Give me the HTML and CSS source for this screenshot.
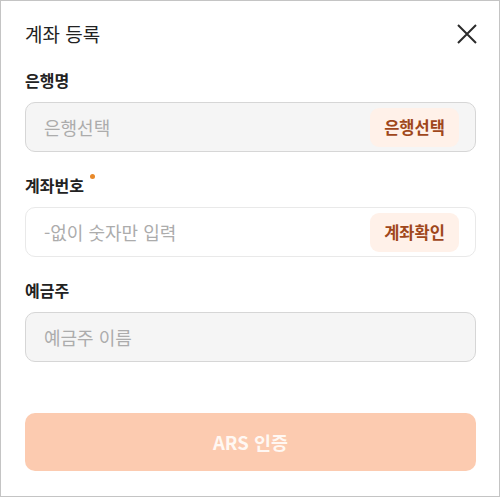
FILE: index.html
```html
<!DOCTYPE html>
<html lang="ko">
<head>
<meta charset="utf-8">
<link rel="stylesheet" href="styles.css">
</head>
<body>
<div class="modal">
  <div class="header">
    <h1 class="title">계좌 등록</h1>
    <button class="close" aria-label="닫기">
      <svg width="20" height="20" viewBox="0 0 20 20"><path d="M1 1L19 19M19 1L1 19" stroke="#2b2b2b" stroke-width="2" fill="none"/></svg>
    </button>
  </div>
  <div class="field">
    <div class="label">은행명</div>
    <div class="box filled">
      <span class="placeholder">은행선택</span>
      <span class="chip">은행선택</span>
    </div>
  </div>
  <div class="field">
    <div class="label">계좌번호<span class="dot"></span></div>
    <div class="box white">
      <span class="placeholder">-없이 숫자만 입력</span>
      <span class="chip">계좌확인</span>
    </div>
  </div>
  <div class="field">
    <div class="label">예금주</div>
    <div class="box filled">
      <span class="placeholder">예금주 이름</span>
    </div>
  </div>
  <button class="submit">ARS 인증</button>
</div>
</body>
</html>
```
FILE: styles.css
```css
* { box-sizing: border-box; }
html, body { margin: 0; padding: 0; background: #fff; }
body { font-family: "Noto Sans CJK KR", "Noto Sans", sans-serif; color: #222; }
.modal {
  width: 500px;
  height: 497px;
  border: 1px solid #c4c4c4;
  padding: 20px 23px 0 24px;
  display: flex;
  flex-direction: column;
}
.header {
  display: flex;
  align-items: center;
  justify-content: space-between;
  height: 26px;
}
.title {
  margin: 0;
  font-size: 19px;
  font-weight: 400;
  line-height: 26px;
  color: #222;
}
.close {
  border: 0;
  background: none;
  padding: 0;
  width: 20px;
  height: 20px;
  margin-right: -1px;
  display: flex;
}
.field { display: flex; flex-direction: column; margin-top: 22px; }
.field:first-of-type { margin-top: 23px; }
.label {
  font-size: 16px;
  font-weight: 700;
  line-height: 22px;
  color: #222;
  margin-bottom: 11px;
  display: flex;
  align-items: flex-start;
}
.dot {
  width: 5px;
  height: 5px;
  border-radius: 50%;
  background: #e8892a;
  margin-left: 6px;
  margin-top: 0px;
}
.box {
  height: 50px;
  border-radius: 10px;
  display: flex;
  align-items: center;
  justify-content: space-between;
  padding: 0 16px 0 18px;
}
.filled { background: #f5f5f5; border: 1px solid #d6d6d6; }
.white { background: #fff; border: 1px solid #e9e9e9; }
.placeholder { font-size: 18px; color: #acacac; }
.chip {
  height: 39px;
  width: 89px;
  border-radius: 9px;
  background: #fff1e9;
  color: #a0471b;
  font-size: 16.5px;
  font-weight: 700;
  display: flex;
  align-items: center;
  justify-content: center;
}
.submit {
  margin-top: 51px;
  height: 58px;
  border: 0;
  border-radius: 10px;
  background: #fccbb0;
  color: #fff8f3;
  font-family: inherit;
  font-size: 18.5px;
  font-weight: 700;
}
```
